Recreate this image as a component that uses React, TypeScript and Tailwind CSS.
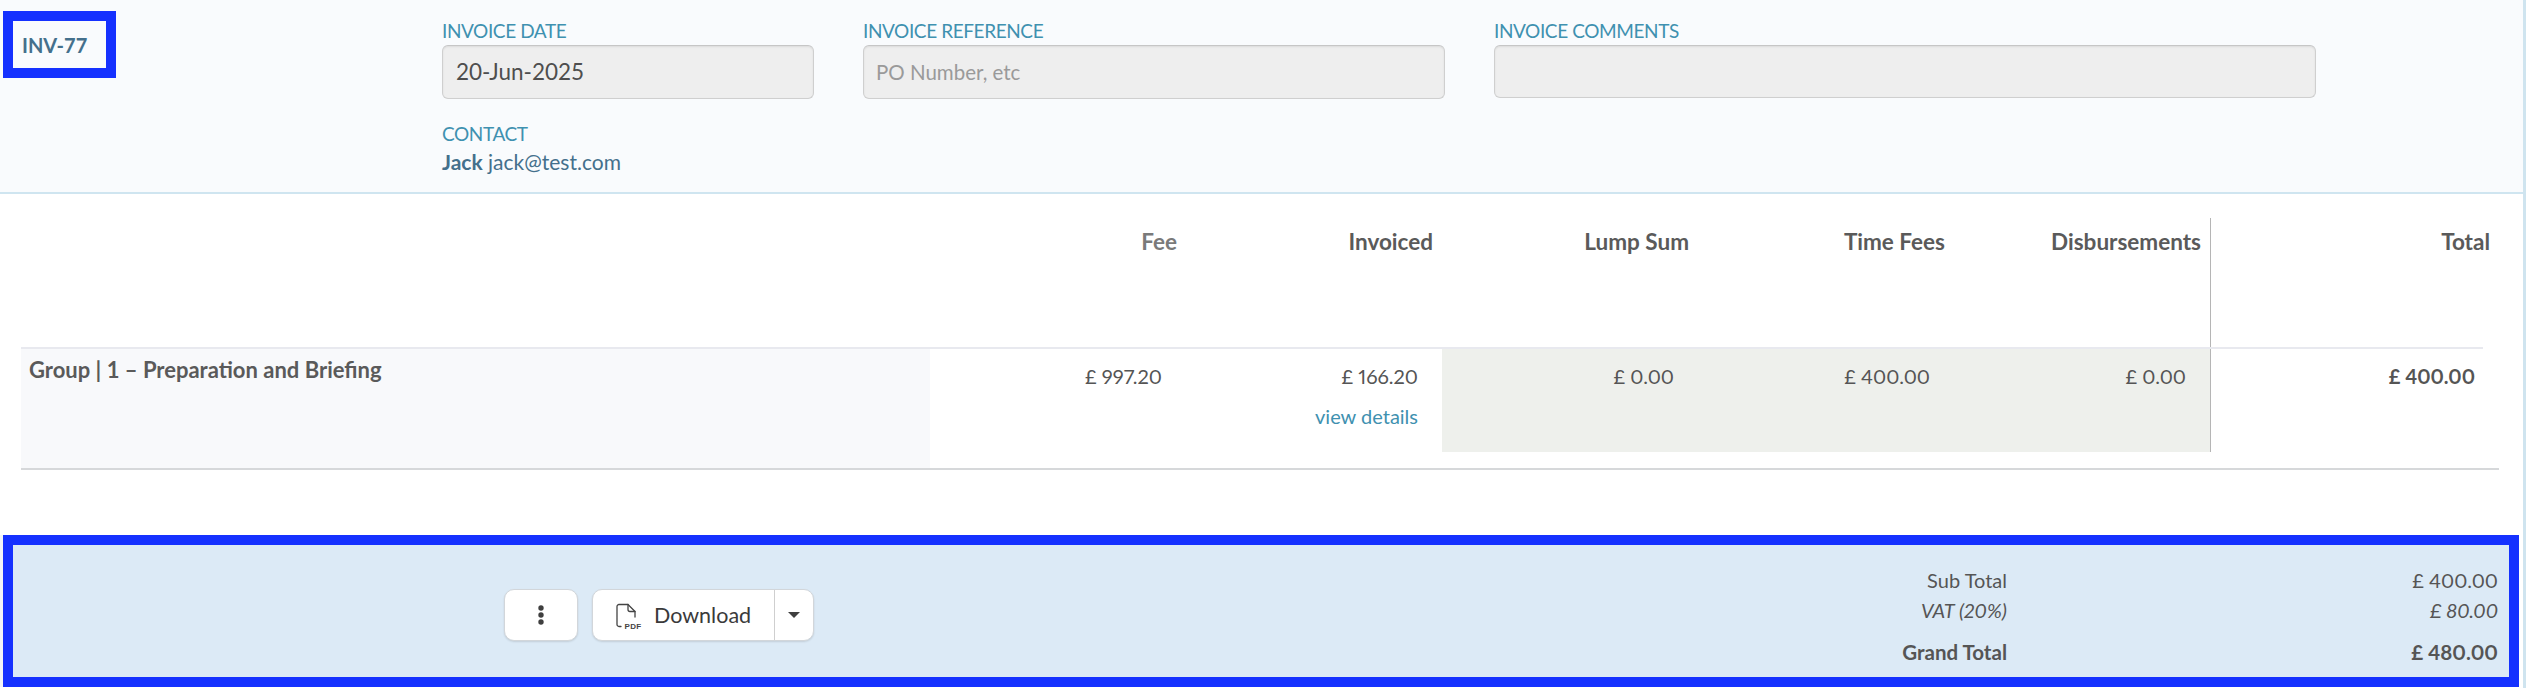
import React from "react";

const font = { fontFamily: '"Lato", "Liberation Sans", sans-serif' };
const value = "pt-[14px] pr-[24px] text-right text-[20px] leading-[26px] proportional-nums";

function Field({ label, value, placeholder, cls, h = "h-[54px]" }: { label: string; value?: string; placeholder?: string; cls: string; h?: string }) {
  return (
    <div className={cls}>
      <div className="h-[19px] text-[19px] leading-[19px] text-[#3f91b0] tracking-[-0.4px] mb-[5px]">{label}</div>
      <div className={`${h} w-full rounded-[6px] border border-[#cfcfcf] border-t-[#c6c6c6] bg-[#eeeeee] shadow-[inset_0_1px_2px_rgba(0,0,0,0.08)] flex items-center ${value ? "px-[13px] text-[22.5px] text-[#4e4e4e]" : "px-[12px] text-[20.5px] text-[#9a9a9a]"}`}>
        {value ?? placeholder}
      </div>
    </div>
  );
}

function Head({ children, cls = "text-[#5a5a5a]" }: { children?: React.ReactNode; cls?: string }) {
  return (
    <div className={`h-[155px] border-b-2 border-[#e8e9ef] pt-[35px] pr-[9px] text-right text-[22.5px] leading-[26px] font-bold ${cls}`}>{children}</div>
  );
}

function PdfIcon() {
  return (
    <svg width="24" height="26" viewBox="0 0 24 26" fill="none" stroke="#444" strokeWidth="1.3" strokeLinejoin="round" strokeLinecap="round" className="mt-[4px] shrink-0 overflow-visible">
      <path d="M5 22.5H3A2 2 0 0 1 1 20.5V2.5A2 2 0 0 1 3 0.5H12L19 7.5V13" />
      <path d="M12 0.5V5.5A2 2 0 0 0 14 7.5H19" />
      <text x="8.5" y="25" fontSize="8" fontWeight="700" letterSpacing="0.3" fill="#444" stroke="none" fontFamily="Liberation Sans, sans-serif">PDF</text>
    </svg>
  );
}

export default function App() {
  return (
    <div className="w-[2526px] h-[688px] overflow-hidden bg-white flex flex-col border-r-[3px] border-[#cfe4ef] text-[#555555]" style={font}>
      <header className="h-[194px] shrink-0 bg-[#f9fbfd] border-b-2 border-[#cfe5f0] flex items-start">
        <div className="ml-[3px] mt-[11px] w-[113px] h-[67px] border-[10px] border-[#1531ff] shrink-0 flex items-center pl-[9px] text-[20px] font-bold text-[#44708c]">INV-77</div>
        <div className="ml-[326px] mt-[21px] w-[372px] shrink-0">
          <Field label="INVOICE DATE" value="20-Jun-2025" cls="w-full" />
          <div className="mt-[25px] text-[19px] leading-[19px] text-[#3f91b0] tracking-[-0.4px]">CONTACT</div>
          <div className="mt-[7px] text-[21px] leading-[24px] text-[#44708c]"><span className="font-bold">Jack</span> jack@test.com</div>
        </div>
        <Field label="INVOICE REFERENCE" placeholder="PO Number, etc" cls="ml-[49px] mt-[21px] w-[582px] shrink-0" />
        <Field label="INVOICE COMMENTS" cls="ml-[49px] mt-[21px] w-[822px] shrink-0" h="h-[53px]" />
      </header>

      <section className="ml-[21px] w-[2478px] grid grid-cols-[909px_256px_256px_256px_256px_257px_288px] shrink-0">
        <Head />
        <Head cls="text-[#7a7a7a]">Fee</Head>
        <Head>Invoiced</Head>
        <Head>Lump Sum</Head>
        <Head>Time Fees</Head>
        <div className="h-[155px] border-b-2 border-[#e8e9ef] pt-[24px]">
          <div className="h-[129px] border-r border-[#b5b5b5] pt-[11px] pr-[9px] text-right text-[22.5px] leading-[26px] font-bold text-[#5a5a5a]">Disbursements</div>
        </div>
        <div className="h-[155px] pt-[35px] pr-[9px] text-right text-[22.5px] leading-[26px] font-bold text-[#5a5a5a]">
          <div>Total</div>
          <div className="mt-[92px] mr-[7px] h-[2px] bg-[#e8e9ef]" />
        </div>

        <div className="row-start-2 h-[119px] bg-[#f8f9fb] pl-[8px] pt-[7px] text-[22px] leading-[28px] font-bold text-[#5a5a5a]">Group | 1 – Preparation and Briefing</div>
        <div className={`row-start-2 ${value}`}>£ 997.20</div>
        <div className={`row-start-2 ${value}`}>
          <div>£ 166.20</div>
          <div className="mt-[14px] text-[20px] text-[#3f91b0]">view details</div>
        </div>
        <div className={`row-start-2 h-[103px] bg-[#eef0ec] ${value}`}>£ 0.00</div>
        <div className={`row-start-2 h-[103px] bg-[#eef0ec] ${value}`}>£ 400.00</div>
        <div className={`row-start-2 h-[103px] bg-[#eef0ec] border-r border-[#b5b5b5] ${value}`}>£ 0.00</div>
        <div className={`row-start-2 font-bold ${value}`}>£ 400.00</div>
      </section>
      <div className="ml-[21px] w-[2478px] h-[2px] bg-[#d6d8da] shrink-0" />

      <div className="h-[65px] shrink-0" />

      <div className="border-l-[3px] border-[#f3f5f7] shrink-0">
        <footer className="w-[2516px] h-[152px] border-[10px] border-[#1531ff] bg-[#dceaf6] flex items-start">
          <div className="ml-[491px] mt-[44px] flex items-center gap-[14px]">
            <div className="w-[74px] h-[52px] rounded-[10px] bg-white border border-[#d2d6da] shadow-[0_1px_2px_rgba(0,0,0,0.12)] flex items-center justify-center">
              <svg width="8" height="22" viewBox="0 0 8 22" fill="#3f3f3f"><circle cx="4" cy="4" r="2.7" /><circle cx="4" cy="11" r="2.7" /><circle cx="4" cy="18" r="2.7" /></svg>
            </div>
            <div className="w-[222px] h-[52px] rounded-[10px] bg-white border border-[#d2d6da] shadow-[0_1px_2px_rgba(0,0,0,0.12)] flex items-center text-[#3a3a3a]">
              <div className="w-[182px] h-full border-r border-[#cfcfcf] flex items-center pl-[23px] gap-[14px]">
                <PdfIcon />
                <span className="text-[21.5px]">Download</span>
              </div>
              <div className="flex-1 flex items-center justify-center">
                <svg width="12" height="6" viewBox="0 0 12 6" fill="#3f3f3f"><path d="M0 0H12L6 6Z" /></svg>
              </div>
            </div>
          </div>
          <div className="ml-auto mr-[11px] mt-[20px] w-[800px] grid grid-cols-[1fr_491px] text-right text-[20px] leading-[30px] proportional-nums">
            <div>Sub Total</div><div>£ 400.00</div>
            <div className="italic">VAT (20%)</div><div className="italic">£ 80.00</div>
            <div className="font-bold text-[20.5px] mt-[12px]">Grand Total</div><div className="font-bold text-[20.5px] mt-[12px]">£ 480.00</div>
          </div>
        </footer>
      </div>
    </div>
  );
}
